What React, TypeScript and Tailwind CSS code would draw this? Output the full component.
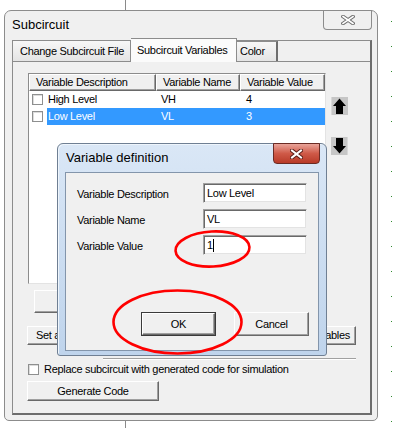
import React from "react";

const raised =
  "bg-[#f0f0f0] border border-t-white border-l-white border-r-[#696969] border-b-[#696969] shadow-[inset_-1px_-1px_0_#a0a0a0]";

function Checkbox() {
  return <div className="w-[11px] h-[11px] shrink-0 border border-[#8e8f8f] bg-white shadow-[inset_1px_1px_0_#dcdcdc]" />;
}

function Arrow({ down }: { down?: boolean }) {
  return (
    <svg width="17" height="18" viewBox="0 0 17 18" className={down ? "rotate-180" : ""}>
      <rect width="17" height="18" fill="#c6c6c6" />
      <rect width="1" height="18" fill="#d8d8d8" />
      <path d="M8.5 1.5 L15 9 L12 9 L12 17 L5 17 L5 9 L2 9 Z" fill="#000" />
    </svg>
  );
}

function OutlineX({ w, h, outline, fill, sw }: { w: number; h: number; outline: string; fill: string; sw: number }) {
  return (
    <svg width={w} height={h} viewBox={`0 0 ${w} ${h}`}>
      <path d={`M2 1.5 L${w - 2} ${h - 1.5} M${w - 2} 1.5 L2 ${h - 1.5}`} stroke={outline} strokeWidth={sw + 2} strokeLinecap="square" fill="none" />
      <path d={`M2 1.5 L${w - 2} ${h - 1.5} M${w - 2} 1.5 L2 ${h - 1.5}`} stroke={fill} strokeWidth={sw} strokeLinecap="square" fill="none" />
    </svg>
  );
}

export default function App() {
  const dots = Array.from({ length: 17 });
  return (
    <div className="relative w-[403px] h-[428px] bg-white overflow-hidden font-['Liberation_Sans',Arial,sans-serif] text-[11px] tracking-[-0.3px] text-black pt-[10px] pl-[4px]">
      {/* background line */}
      <div className="absolute left-[125px] top-0 h-full w-px bg-[#8a8a8a]" />
      {/* green dotted guide */}
      <div className="absolute left-[391px] top-[21px] flex flex-col gap-[24px]">
        {dots.map((_, i) => (
          <div key={i} className="w-px h-px bg-[#2f8a2f]" />
        ))}
      </div>

      {/* Main window */}
      <div className="relative w-[374px] h-[411px] border border-[#8c8c8c] rounded-t-[7px] rounded-b-[5px] bg-[#f0f0f0] flex flex-col">
        <div className="h-[27px] flex justify-between items-start">
          <div className="h-full flex items-center pl-[7px] text-[13px] tracking-normal">Subcircuit</div>
          <div className="mr-[5px] -mt-px w-[49px] h-[20px] border border-t-0 border-[#8c8c8c] rounded-b-[4px] flex items-center justify-center">
            <OutlineX w={14} h={10} outline="#6f6f6f" fill="#ffffff" sw={1.6} />
          </div>
        </div>

        {/* Tab control frame */}
        <div className="ml-[7px] mr-[5px] mt-[2px] h-[375px] border-t border-l border-[#8c8c8c] border-r-2 border-b-2 border-r-[#6d6d6d] border-b-[#6d6d6d] flex flex-col">
          <div className="h-[20px] flex items-end shrink-0">
            <div className="w-[118px] h-[20px] border-r border-[#8c8c8c] bg-[linear-gradient(to_bottom,#f7f7f7,#e4e4e4)] flex items-center pl-[7px]">
              Change Subcircuit File
            </div>
            <div className="relative z-10 -mb-px w-[106px] h-[24px] border-t border-r border-[#8c8c8c] bg-[#fbfbfb] flex items-center pl-[6px] pb-[1px]">
              Subcircuit Variables
            </div>
            <div className="w-[41px] h-[20px] border-t border-r-2 border-t-[#8c8c8c] border-r-[#6d6d6d] bg-[linear-gradient(to_bottom,#f7f7f7,#e4e4e4)] flex items-center pl-[3px]">
              Color
            </div>
          </div>

          {/* Tab page */}
          <div className="flex-1 border-t border-[#8c8c8c] bg-[#f0f0f0] flex flex-col">
            <div className="mt-[11px] ml-[15px] flex">
              {/* list view */}
              <div className="w-[298px] h-[211px] border border-[#8c8c8c] border-r-[#e3e3e3] border-b-[#e3e3e3] bg-white flex flex-col">
                <div className="h-[17px] flex shrink-0">
                  <div className="w-[127px] h-full border border-t-white border-l-white border-r-[#696969] border-b-[#696969] shadow-[inset_-1px_-1px_0_#a0a0a0] bg-[#f0f0f0] flex items-center pl-[6px]">
                    Variable Description
                  </div>
                  <div className="w-[84px] h-full border border-t-white border-l-white border-r-[#696969] border-b-[#696969] shadow-[inset_-1px_-1px_0_#a0a0a0] bg-[#f0f0f0] flex items-center pl-[6px]">
                    Variable Name
                  </div>
                  <div className="w-[85px] h-full border border-t-white border-l-white border-r-[#696969] border-b-[#696969] shadow-[inset_-1px_-1px_0_#a0a0a0] bg-[#f0f0f0] flex items-center pl-[6px]">
                    Variable Value
                  </div>
                </div>
                <div className="h-[17px] flex items-center">
                  <div className="w-[18px] pl-[3px]"><Checkbox /></div>
                  <div className="w-[109px] pl-[1px]">High Level</div>
                  <div className="w-[84px] pl-[5px]">VH</div>
                  <div className="flex-1 pl-[6px]">4</div>
                </div>
                <div className="h-[17px] flex items-center">
                  <div className="w-[18px] pl-[3px]"><Checkbox /></div>
                  <div className="flex-1 h-full flex items-center bg-[#3399ff] text-white">
                    <div className="w-[109px] pl-[1px]">Low Level</div>
                    <div className="w-[84px] pl-[5px]">VL</div>
                    <div className="flex-1 pl-[6px]">3</div>
                  </div>
                </div>
              </div>
              {/* arrows */}
              <div className="ml-[5px] mt-[24px] flex flex-col gap-[22px]">
                <Arrow />
                <Arrow down />
              </div>
            </div>

            <div className="mt-[6px] ml-[21px] flex gap-[10px]">
              <div className={`${raised} w-[130px] h-[23px] flex items-center justify-center`}>Add Variable</div>
              <div className={`${raised} w-[130px] h-[23px] flex items-center justify-center`}>Remove Variable</div>
            </div>

            <div className="mt-[13px] ml-[14px] mr-[14px] flex justify-between">
              <div className={`${raised} w-[150px] h-[19px] flex items-center pl-[8px]`}>Set as Default Values</div>
              <div className={`${raised} w-[120px] h-[19px] flex items-center justify-end pr-[5px]`}>Clear All Variables</div>
            </div>

            <div className="mt-[13px] ml-[90px] mr-[14px] h-px bg-[#a0a0a0] shadow-[0_1px_0_#ffffff]" />

            <div className="mt-[4px] ml-[15px] flex items-center gap-[5px] h-[12px]">
              <Checkbox />
              <span>Replace subcircuit with generated code for simulation</span>
            </div>

            <div className="mt-[6px] ml-[14px]">
              <div className={`${raised} w-[132px] h-[20px] flex items-center justify-center`}>Generate Code</div>
            </div>
          </div>
        </div>
      </div>

      {/* Modal dialog */}
      <div className="absolute left-[57px] top-[143px] w-[270px] h-[213px] rounded-t-[6px] rounded-b-[3px] border border-[#6f7f93] bg-[linear-gradient(to_bottom,#dae7f6,#bfd4ec)] shadow-[inset_1px_1px_0_#eef5fc] flex flex-col">
        <div className="h-[28px] flex justify-between items-start shrink-0">
          <div className="h-full flex items-center pl-[8px] text-[13px] tracking-normal">Variable definition</div>
          <div className="-mt-px mr-[6px] w-[47px] h-[21px] rounded-b-[4px] border border-[#6b2b24] bg-[linear-gradient(to_bottom,#e9a49a,#cf5a48_50%,#b83a28)] flex items-center justify-center">
            <OutlineX w={13} h={10} outline="#5a1e18" fill="#ffffff" sw={2} />
          </div>
        </div>
        <div className="mx-[7px] h-[179px] border border-[#8395ab] bg-[#f0f0f0] flex flex-col">
          <div className="pt-[10px] pl-[11px] flex flex-col gap-[6px]">
            {[
              ["Variable Description", "Low Level"],
              ["Variable Name", "VL"],
              ["Variable Value", "1"],
            ].map(([label, val], i) => (
              <div key={i} className="flex items-center h-[20px]">
                <div className="w-[126px] pt-[2px]">{label}</div>
                <div className="w-[104px] h-[20px] bg-white border border-t-[#a0a0a0] border-l-[#a0a0a0] border-r-[#f0f0f0] border-b-[#f0f0f0] shadow-[inset_1px_1px_0_#696969,inset_-1px_-1px_0_#e3e3e3] flex items-center pl-[3px]">
                  {val}
                  {i === 2 && <div className="w-px h-[13px] bg-black" />}
                </div>
              </div>
            ))}
          </div>
          <div className="mt-[57px] pr-[9px] flex justify-end gap-[18px]">
            <div className="w-[75px] h-[24px] border border-[#3a3a3a]">
              <div className={`${raised} w-full h-full flex items-center justify-center`}>OK</div>
            </div>
            <div className={`${raised} w-[75px] h-[24px] flex items-center justify-center`}>Cancel</div>
          </div>
        </div>
      </div>

      {/* red annotations */}
      <svg className="absolute left-0 top-0 pointer-events-none" width="403" height="428" viewBox="0 0 403 428">
        <ellipse cx="212.5" cy="249" rx="37" ry="17.5" transform="rotate(-3 212.5 249)" fill="none" stroke="#ff0000" strokeWidth="2.6" />
        <ellipse cx="177.5" cy="322" rx="64" ry="31.5" fill="none" stroke="#ff0000" strokeWidth="2.6" />
      </svg>
    </div>
  );
}
